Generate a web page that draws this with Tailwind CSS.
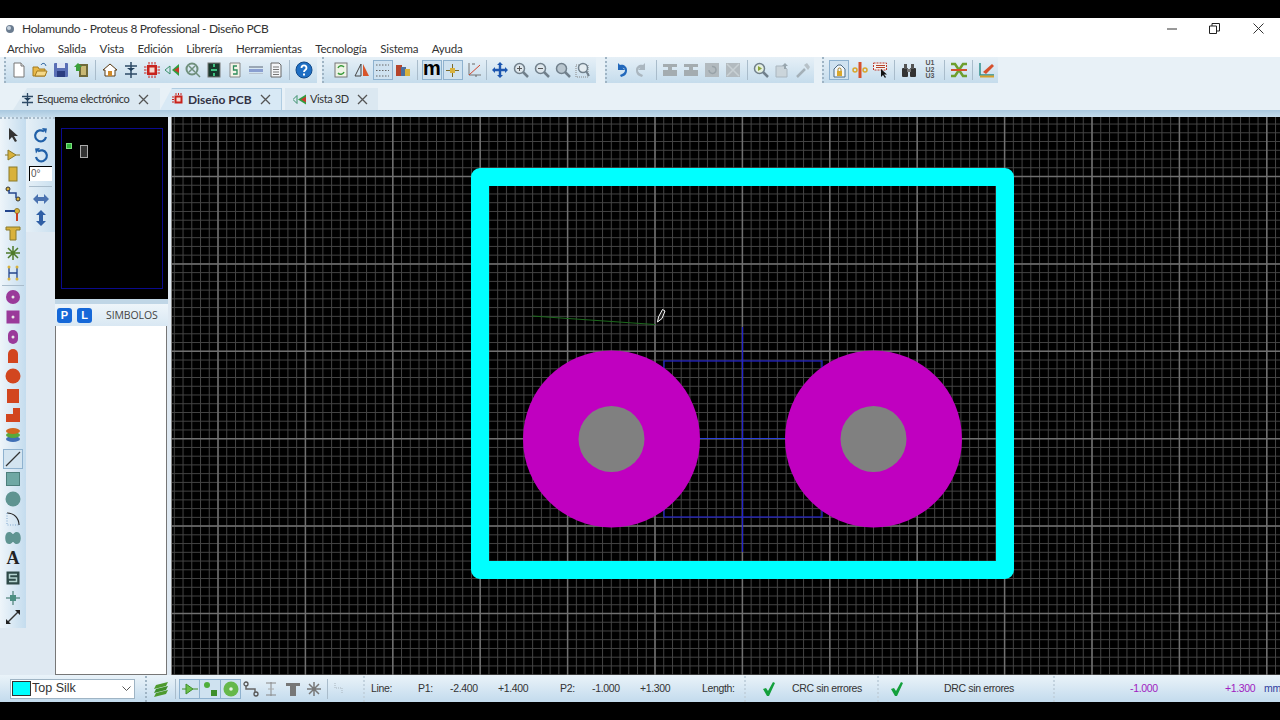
<!DOCTYPE html>
<html lang="en">
<head>
<meta charset="UTF-8">
<title>Holamundo - Proteus 8 Professional - Diseño PCB</title>
<script src="https://cdn.jsdelivr.net/npm/@tailwindcss/browser@4"></script>
</head>
<body class="bg-black overflow-hidden">
<div class="w-[1280px] h-[720px] flex flex-col font-['Liberation_Sans',sans-serif] text-[11px] text-[#222]">
  <div class="h-[18px] bg-black shrink-0"></div>

  <!-- title bar -->
  <div class="h-[21px] bg-white flex items-center shrink-0">
    <svg class="ml-[5px] w-[10px] h-[10px]" viewBox="0 0 10 10"><circle cx="5" cy="5" r="4" fill="#6b7c90"/><circle cx="4" cy="4" r="2" fill="#c6d2de"/></svg>
    <span class="ml-[7px] text-[12px] tracking-[-0.35px] text-[#333] font-['Lato',sans-serif]">Holamundo - Proteus 8 Professional - Diseño PCB</span>
    <div class="ml-auto flex items-center h-full">
      <svg class="w-[10px] h-[10px] mr-[32px]" viewBox="0 0 10 10"><path d="M0 5h10" stroke="#333" fill="none"/></svg>
      <svg class="w-[11px] h-[11px] mr-[33px]" viewBox="0 0 11 11"><path d="M0.500 3h7v7.500h-7zM3 3V0.500h7.500V8H8" stroke="#222" fill="none"/></svg>
      <svg class="w-[11px] h-[11px] mr-[16px]" viewBox="0 0 11 11"><path d="M0.500 0.500l10 10M10.500 0.500l-10 10" stroke="#333" fill="none"/></svg>
    </div>
  </div>

  <!-- menu -->
  <div class="h-[18px] bg-white flex items-center gap-[13.5px] pl-[7px] pt-[2px] shrink-0 text-[11.5px] tracking-[-0.2px] text-[#333] font-['Lato',sans-serif]">
    <span>Archivo</span><span>Salida</span><span>Vista</span><span>Edición</span><span>Librería</span><span>Herramientas</span><span>Tecnología</span><span>Sistema</span><span>Ayuda</span>
  </div>

  <!-- main toolbar -->
  <div class="h-[27px] bg-[#e8f1f7] shrink-0 flex items-start">
    <div class="ml-[4px] h-[26px] w-[313px] bg-gradient-to-b from-[#e6f0f7] to-[#c5dcec] border-l-2 border-dotted border-[#9fb4c4] flex items-center gap-[4.8px] pl-[5px]">
      <svg class="w-4 h-4 shrink-0" viewBox="0 0 16 16"><path d="M3 1h7l3 3v11H3z" fill="#fff" stroke="#777"/><path d="M10 1v3h3" fill="#e5e5e5" stroke="#777"/></svg>
      <svg class="w-4 h-4 shrink-0" viewBox="0 0 16 16"><path d="M1 5h5l1 2h6v7H1z" fill="#e9b949" stroke="#a37a1e"/><path d="M3 14l2-5h10l-2 5z" fill="#f5d98a" stroke="#a37a1e"/><path d="M9 3c1-2 3-2 4-1l1 2" stroke="#3a6ea5" fill="none"/></svg>
      <svg class="w-4 h-4 shrink-0" viewBox="0 0 16 16"><rect x="1" y="1" width="14" height="14" rx="1" fill="#5a6fb5"/><rect x="4" y="1" width="8" height="5" fill="#dfe6f5"/><rect x="4" y="9" width="8" height="6" fill="#2b3d80"/></svg>
      <svg class="w-4 h-4 shrink-0" viewBox="0 0 16 16"><rect x="6" y="2" width="9" height="13" fill="#6f6a3a"/><rect x="8" y="4" width="5" height="9" fill="#c9b874"/><path d="M1 5l4-4 4 4H7v4H3V5z" fill="#3aa03a"/></svg>
      <div class="w-px h-5 bg-[#a9bccb] mx-px shrink-0"></div>
      <svg class="w-4 h-4 shrink-0" viewBox="0 0 16 16"><path d="M1 8l7-6 7 6h-2v6H3V8z" fill="#fff" stroke="#5b3a12"/><rect x="6" y="9" width="4" height="5" fill="#d08a2a"/></svg>
      <svg class="w-4 h-4 shrink-0" viewBox="0 0 16 16"><path d="M8 0v16M2 4h12M2 12h12" stroke="#2d4a66" stroke-width="1.500"/><path d="M4 6h8l-4 3z" fill="#1f3d5a"/></svg>
      <svg class="w-4 h-4 shrink-0" viewBox="0 0 16 16"><rect x="3" y="3" width="10" height="10" fill="#c8221c"/><rect x="5.500" y="5.500" width="5" height="5" fill="#f4d9d0"/><path d="M0 5h16M0 8h16M0 11h16M5 0v16M8 0v16M11 0v16" stroke="#c8221c" stroke-dasharray="2.500 11"/></svg>
      <svg class="w-4 h-4 shrink-0" viewBox="0 0 16 16"><path d="M1 8l5-4v8z" fill="none" stroke="#3a8f6a"/><path d="M8 8l7-6v12z" fill="#2f9e3f"/><path d="M10 8l5-3v6z" fill="#c83a2a"/></svg>
      <svg class="w-4 h-4 shrink-0" viewBox="0 0 16 16"><circle cx="7" cy="7" r="5.500" fill="none" stroke="#6f8f7c" stroke-width="2"/><path d="M4 4l6 6M10 4l-6 6M11 11l4 4" stroke="#6f8f7c" stroke-width="1.500"/></svg>
      <svg class="w-4 h-4 shrink-0" viewBox="0 0 16 16"><rect x="2" y="1" width="12" height="14" fill="#18382c" stroke="#777"/><path d="M8 2v3M5 8h6M8 11v3" stroke="#3fc07f" stroke-width="2"/></svg>
      <svg class="w-4 h-4 shrink-0" viewBox="0 0 16 16"><path d="M3 1h10v14H3z" fill="#f4f4e8" stroke="#888"/><path d="M10 4H6.500v4H10v4H6" stroke="#2e8a5a" fill="none" stroke-width="1.300"/></svg>
      <svg class="w-4 h-4 shrink-0" viewBox="0 0 16 16"><rect x="1" y="4" width="14" height="2" fill="#9aa7b5"/><rect x="1" y="7" width="14" height="3" fill="#8a9fd0"/><rect x="1" y="11" width="14" height="1" fill="#b8c3cf"/></svg>
      <svg class="w-4 h-4 shrink-0" viewBox="0 0 16 16"><path d="M3 1h8l2 2v12H3z" fill="#f4f6f8" stroke="#666"/><path d="M5 5h6M5 7.500h6M5 10h6M5 12.500h6" stroke="#777"/></svg>
      <div class="w-px h-5 bg-[#a9bccb] shrink-0"></div>
      <svg class="w-[18px] h-[18px] shrink-0" viewBox="0 0 18 18"><circle cx="9" cy="9" r="8" fill="#1f6fc4" stroke="#124a8a"/><path d="M6.500 7c0-3.500 5-3.500 5 0 0 2-2.500 2-2.500 4" fill="none" stroke="#fff" stroke-width="1.800"/><rect x="8" y="12.500" width="2" height="2" fill="#fff"/></svg>
    </div>
    <div class="ml-[5px] h-[26px] w-[274px] bg-gradient-to-b from-[#e6f0f7] to-[#c5dcec] border-l-2 border-dotted border-[#9fb4c4] flex items-center gap-[4.8px] pl-[9px]">
      <svg class="w-4 h-4 shrink-0" viewBox="0 0 16 16"><rect x="2" y="1" width="12" height="14" fill="#eef3e6" stroke="#777"/><path d="M5 6a3.500 3.500 0 0 1 6-1M11 10a3.500 3.500 0 0 1-6 1" stroke="#3a9a3a" stroke-width="1.500" fill="none"/></svg>
      <svg class="w-4 h-4 shrink-0" viewBox="0 0 16 16"><path d="M7 2v12H1z" fill="none" stroke="#444"/><path d="M9 2v12h6z" fill="#d8552b"/></svg>
      <div class="w-5 h-5 -mx-[2px] shrink-0 bg-[#cfe2f0] border border-[#8fb2cf] flex items-center justify-center"><svg class="w-[15px] h-[15px]" viewBox="0 0 15 15"><path d="M1 2h13M1 7.500h13M1 13h13" stroke="#666" stroke-dasharray="1.500 1.500"/></svg></div>
      <svg class="w-4 h-4 shrink-0" viewBox="0 0 16 16"><rect x="1" y="3" width="6" height="11" fill="#b5452c"/><rect x="6" y="5" width="5" height="9" fill="#4b6f9e"/><rect x="10" y="7" width="5" height="7" fill="#d9b23c"/></svg>
      <div class="w-px h-5 bg-[#a9bccb] mx-px shrink-0"></div>
      <div class="w-5 h-5 -mx-[2px] shrink-0 bg-[#cfe2f0] border border-[#8fb2cf] flex items-center justify-center text-[20px] leading-[15px] pb-[3px] font-bold text-black">m</div>
      <div class="w-5 h-5 -mx-[2px] shrink-0 bg-[#cfe2f0] border border-[#8fb2cf] flex items-center justify-center"><svg class="w-[15px] h-[15px]" viewBox="0 0 15 15"><path d="M7.500 1v13M1 7.500h13" stroke="#7a6a2a"/><rect x="5" y="5" width="5" height="5" fill="#d9b23c"/></svg></div>
      <svg class="w-4 h-4 shrink-0" viewBox="0 0 16 16"><path d="M3 1v12h12" stroke="#777" fill="none"/><path d="M3 13L14 3" stroke="#d0452c"/><path d="M6 2h3M10 13v2" stroke="#666"/></svg>
      <div class="w-px h-5 bg-[#a9bccb] shrink-0"></div>
      <svg class="w-4 h-4 shrink-0" viewBox="0 0 16 16"><path d="M8 0l3 3H9.200v3.800H13V5l3 3-3 3V9.200H9.200V13H11l-3 3-3-3h1.800V9.200H3V11L0 8l3-3v1.800h3.800V3H5z" fill="#1c56b0"/></svg>
      <svg class="w-4 h-4 shrink-0" viewBox="0 0 16 16"><circle cx="6.500" cy="6.500" r="5" fill="#dde6ec" stroke="#71808c" stroke-width="1.500"/><path d="M10 10l5 5" stroke="#71808c" stroke-width="2.500"/><path d="M4 6.500h5M6.500 4v5" stroke="#555"/></svg>
      <svg class="w-4 h-4 shrink-0" viewBox="0 0 16 16"><circle cx="6.500" cy="6.500" r="5" fill="#dde6ec" stroke="#71808c" stroke-width="1.500"/><path d="M10 10l5 5" stroke="#71808c" stroke-width="2.500"/><path d="M4 6.500h5" stroke="#555"/></svg>
      <svg class="w-4 h-4 shrink-0" viewBox="0 0 16 16"><circle cx="6.500" cy="6.500" r="5" fill="#b9c6cf" stroke="#71808c" stroke-width="1.500"/><path d="M10 10l5 5" stroke="#71808c" stroke-width="2.500"/></svg>
      <svg class="w-4 h-4 shrink-0" viewBox="0 0 16 16"><rect x="1" y="3" width="12" height="12" fill="none" stroke="#888" stroke-dasharray="1 1"/><circle cx="8" cy="6" r="4.500" fill="#e4ecf1" stroke="#71808c" stroke-width="1.500"/><path d="M11 9l3 5" stroke="#71808c" stroke-width="2"/></svg>
    </div>
    <div class="ml-[9px] h-[26px] w-[209px] bg-gradient-to-b from-[#e6f0f7] to-[#c5dcec] border-l-2 border-dotted border-[#9fb4c4] flex items-center gap-[4.8px] pl-[6px]">
      <svg class="w-4 h-4 shrink-0" viewBox="0 0 16 16"><path d="M8 15c4-1 6-3 6-7s-4-6-7-5L5 1v7h7L9.500 5.800C11 6 12 7 12 8.500S10 12 7 13z" fill="#2268bb"/></svg>
      <svg class="w-4 h-4 shrink-0" viewBox="0 0 16 16"><path d="M8 15c-4-1-6-3-6-7s4-6 7-5l2-2v7H4l2.500-2.200C5 6 4 7 4 8.500S6 12 9 13z" fill="#aab6bf"/></svg>
      <div class="w-px h-5 bg-[#a9bccb] mx-px shrink-0"></div>
      <svg class="w-4 h-4 shrink-0" viewBox="0 0 16 16"><path d="M1 2h14v3h-5v3h5v6H1V8h5V5H1z" fill="#a4acb0"/></svg>
      <svg class="w-4 h-4 shrink-0" viewBox="0 0 16 16"><path d="M1 2h14v3h-5v3h5v6H1V8h5V5H1z" fill="#a4acb0"/></svg>
      <svg class="w-4 h-4 shrink-0" viewBox="0 0 16 16"><rect x="1" y="1" width="14" height="14" fill="#b2babf"/><path d="M5 8a3.500 3.500 0 1 0 3-3.500" stroke="#98a2a8" fill="none" stroke-width="1.500"/></svg>
      <svg class="w-4 h-4 shrink-0" viewBox="0 0 16 16"><rect x="1" y="1" width="14" height="14" fill="#b2babf"/><path d="M2 2l12 12M14 2L2 14" stroke="#c8d0d4" stroke-width="1.500"/></svg>
      <div class="w-px h-5 bg-[#a9bccb] mx-px shrink-0"></div>
      <svg class="w-4 h-4 shrink-0" viewBox="0 0 16 16"><circle cx="6.500" cy="6.500" r="5" fill="#e4efe0" stroke="#71808c" stroke-width="1.500"/><path d="M10 10l5 5" stroke="#71808c" stroke-width="2.500"/><path d="M5 4v5l4-2.500z" fill="#8aa53a"/></svg>
      <svg class="w-4 h-4 shrink-0" viewBox="0 0 16 16"><path d="M2 4h8l3 3v8H2z" fill="#cbd5db" stroke="#aab6bf"/><path d="M11 1l3 3h-2v3h-2V4H8z" fill="#98a6ae"/></svg>
      <svg class="w-4 h-4 shrink-0" viewBox="0 0 16 16"><path d="M2 15l8-8" stroke="#a4b0b8" stroke-width="2.500"/><path d="M9 3l3-2 3 4-2 3z" fill="#b7c1c8"/></svg>
    </div>
    <div class="ml-[8px] h-[26px] w-[176px] bg-gradient-to-b from-[#e6f0f7] to-[#c5dcec] border-l-2 border-dotted border-[#9fb4c4] flex items-center gap-[4.8px] pl-[7px]">
      <div class="w-5 h-5 -mx-[2px] shrink-0 bg-[#cfe2f0] border border-[#8fb2cf] flex items-center justify-center"><svg class="w-[15px] h-[15px]" viewBox="0 0 15 15"><path d="M2 14V6l4-4h3l4 4v8z" fill="#f3f6f8" stroke="#4b6a85"/><rect x="5" y="8" width="5" height="5" fill="#d9a72c"/><path d="M6 8V6.500a1.500 1.500 0 0 1 3 0V8" fill="none" stroke="#a07c1e"/></svg></div>
      <svg class="w-4 h-4 shrink-0" viewBox="0 0 16 16"><rect x="6.500" y="0" width="3" height="16" fill="#d6502c"/><circle cx="3" cy="8" r="2" fill="none" stroke="#d9a72c" stroke-width="1.500"/><circle cx="13" cy="8" r="2" fill="none" stroke="#d9a72c" stroke-width="1.500"/></svg>
      <svg class="w-4 h-4 shrink-0" viewBox="0 0 16 16"><rect x="0.500" y="1" width="13" height="7" fill="#f2f2f2" stroke="#c0392b" stroke-dasharray="2 1"/><path d="M3 3.500h9M3 5.500h9" stroke="#b5452c"/><path d="M8 7v8l2-2 2 3 1-1-2-2.500h3z" fill="#111"/></svg>
      <div class="w-px h-5 bg-[#a9bccb] mx-px shrink-0"></div>
      <svg class="w-4 h-4 shrink-0" viewBox="0 0 16 16"><rect x="1" y="6" width="6" height="9" rx="1" fill="#333"/><rect x="9" y="6" width="6" height="9" rx="1" fill="#333"/><rect x="3" y="2" width="3" height="5" fill="#555"/><rect x="10" y="2" width="3" height="5" fill="#555"/><rect x="6" y="7" width="4" height="3" fill="#777"/></svg>
      <div class="flex flex-col w-4 shrink-0 text-[7px] leading-[6.500px] text-[#555] text-center font-bold"><span>U1</span><span>U2</span><span>U3</span></div>
      <div class="w-px h-5 bg-[#a9bccb] mx-px shrink-0"></div>
      <svg class="w-4 h-4 shrink-0" viewBox="0 0 16 16"><path d="M0 2h4l8 12h4M0 14h4l8-12h4" stroke="#6d9e2e" stroke-width="2.500" fill="none"/><path d="M0 8h16" stroke="#d6502c" stroke-width="2"/></svg>
      <div class="w-px h-5 bg-[#a9bccb] mx-px shrink-0"></div>
      <svg class="w-4 h-4 shrink-0" viewBox="0 0 16 16"><path d="M1 1v12h14" stroke="#2f8f8a" stroke-width="1.500" fill="none"/><path d="M4 10L13 2l2 2-8 8z" fill="#d6502c"/><rect x="1" y="13.500" width="14" height="2" fill="#d6a12c"/></svg>
    </div>
  </div>

  <!-- tab strip -->
  <div class="h-[26px] bg-[#e8f1f7] shrink-0 flex items-end pl-[13px] text-[#333]">
    <div class="h-[22px] w-[147px] bg-[#dbe8f1] flex items-center pl-[8px] [clip-path:polygon(0_100%,14px_0,100%_0,100%_100%)]">
      <svg class="w-[13px] h-[13px] shrink-0" viewBox="0 0 13 13"><path d="M6.500 0v13M1 3.500h11M1 9.500h11" stroke="#2d4a66" stroke-width="1.300"/><path d="M3 5h7L6.500 8z" fill="#1f3d5a"/></svg>
      <span class="ml-[3px] text-[11px] tracking-[-0.4px] font-['Lato',sans-serif] whitespace-nowrap">Esquema electrónico</span>
      <svg class="w-[11px] h-[11px] ml-auto mr-[11px] shrink-0" viewBox="0 0 11 11"><path d="M1 1l9 9M10 1l-9 9" stroke="#555" stroke-width="1.300"/></svg>
    </div>
    <div class="h-[22px] w-[122px] bg-[#d8e9f5] border-t border-r border-[#b0cde2] flex items-center pl-[12px] [clip-path:polygon(0_100%,12px_0,100%_0,100%_100%)]">
      <svg class="w-[13px] h-[13px] shrink-0" viewBox="0 0 13 13"><rect x="2.500" y="2.500" width="8" height="8" fill="#c8221c"/><rect x="4.500" y="4.500" width="4" height="4" fill="#f4d9d0"/><path d="M0 4h13M0 6.500h13M0 9h13M4 0v13M6.500 0v13M9 0v13" stroke="#c8221c" stroke-dasharray="2 11"/></svg>
      <span class="ml-[3px] text-[12px] font-bold text-[#334] font-['Lato',sans-serif] whitespace-nowrap">Diseño PCB</span>
      <svg class="w-[11px] h-[11px] ml-auto mr-[10px] shrink-0" viewBox="0 0 11 11"><path d="M1 1l9 9M10 1l-9 9" stroke="#555" stroke-width="1.300"/></svg>
    </div>
    <div class="ml-[3px] h-[22px] w-[93px] bg-[#dbe8f1] flex items-center pl-[8px]">
      <svg class="w-[14px] h-[11px] shrink-0" viewBox="0 0 14 11"><path d="M0 5.500l4-4v8z" fill="none" stroke="#3a8f6a"/><path d="M5 5.500l8-5v10z" fill="#2f9e3f"/><path d="M8 5.500l5-3v6z" fill="#c83a2a"/></svg>
      <span class="ml-[3px] text-[11px] tracking-[-0.4px] font-['Lato',sans-serif] whitespace-nowrap">Vista 3D</span>
      <svg class="w-[11px] h-[11px] ml-auto mr-[10px] shrink-0" viewBox="0 0 11 11"><path d="M1 1l9 9M10 1l-9 9" stroke="#555" stroke-width="1.300"/></svg>
    </div>
  </div>
  <div class="h-[7px] bg-gradient-to-b from-[#a9c8df] to-[#c5dcec] shrink-0"></div>

  <!-- work area -->
  <div class="h-[558px] flex shrink-0 bg-[#dfe9f2]">
    <!-- left tool column -->
    <div class="w-[26px] shrink-0 h-[511px] bg-gradient-to-r from-[#eef5fa] to-[#c4dcee] border-t-2 border-dotted border-[#a9bccb] flex flex-col items-center pt-[8px] gap-[3.7px]">
      <svg class="w-4 h-4 shrink-0" viewBox="0 0 16 16"><path d="M4 1v12l3-3 3 5 2-1-3-5h4z" fill="#333"/></svg>
      <svg class="w-4 h-4 shrink-0" viewBox="0 0 16 16"><path d="M3 3l8 5-8 5z" fill="#d9b23c" stroke="#8a7a2a"/><path d="M0 8h3M11 8h4" stroke="#8a7a2a"/></svg>
      <svg class="w-4 h-4 shrink-0" viewBox="0 0 16 16"><rect x="4" y="1" width="8" height="14" fill="#d9b23c" stroke="#8a7a2a"/></svg>
      <svg class="w-4 h-4 shrink-0" viewBox="0 0 16 16"><circle cx="3" cy="3" r="2" fill="#d9b23c" stroke="#333"/><circle cx="13" cy="13" r="2" fill="#d9b23c" stroke="#333"/><path d="M4 4v3h7v5" stroke="#24458c" stroke-width="1.500" fill="none"/></svg>
      <svg class="w-4 h-4 shrink-0" viewBox="0 0 16 16"><circle cx="12" cy="5" r="2.500" fill="#d9b23c" stroke="#8a7a2a"/><path d="M0 5h10" stroke="#24458c" stroke-width="2"/><path d="M12 7v8" stroke="#c8401f" stroke-width="2"/></svg>
      <svg class="w-4 h-4 shrink-0" viewBox="0 0 16 16"><path d="M1 2h14v3h-4v10H5V5H1z" fill="#d9b23c" stroke="#8a7a2a"/></svg>
      <svg class="w-4 h-4 shrink-0" viewBox="0 0 16 16"><path d="M8 1v14M1 8h14M3 3l10 10M13 3L3 13" stroke="#4d7a2a" stroke-width="1.500"/></svg>
      <svg class="w-4 h-4 shrink-0" viewBox="0 0 16 16"><path d="M4 2v12M12 2v12M4 8h8" stroke="#24458c" stroke-width="1.300"/><circle cx="4" cy="2" r="1.500" fill="#d9b23c"/><circle cx="12" cy="2" r="1.500" fill="#d9b23c"/><circle cx="4" cy="14" r="1.500" fill="#d9b23c"/><circle cx="12" cy="14" r="1.500" fill="#d9b23c"/></svg>
      <div class="w-[22px] h-px bg-[#a9bccb] shrink-0"></div>
      <svg class="w-4 h-4 shrink-0" viewBox="0 0 16 16"><circle cx="8" cy="8" r="7" fill="#9a3a9a"/><circle cx="8" cy="8" r="1.500" fill="#e8e8e8"/></svg>
      <svg class="w-4 h-4 shrink-0" viewBox="0 0 16 16"><rect x="1.500" y="1.500" width="13" height="13" fill="#9a3a9a"/><circle cx="8" cy="8" r="1.500" fill="#e8e8e8"/></svg>
      <svg class="w-4 h-4 shrink-0" viewBox="0 0 16 16"><rect x="3" y="1" width="10" height="14" rx="5" fill="#9a3a9a"/><circle cx="8" cy="8" r="1.500" fill="#e8e8e8"/></svg>
      <svg class="w-4 h-4 shrink-0" viewBox="0 0 16 16"><path d="M3 15V6a5 5 0 0 1 10 0v9z" fill="#d2461f"/></svg>
      <svg class="w-4 h-4 shrink-0" viewBox="0 0 16 16"><circle cx="8" cy="8" r="7.500" fill="#d2461f"/></svg>
      <svg class="w-4 h-4 shrink-0" viewBox="0 0 16 16"><rect x="2" y="1" width="12" height="14" fill="#d2461f"/></svg>
      <svg class="w-4 h-4 shrink-0" viewBox="0 0 16 16"><path d="M1 15V7h7V1h7v14z" fill="#d2461f"/></svg>
      <svg class="w-4 h-4 shrink-0" viewBox="0 0 16 16"><ellipse cx="8" cy="12" rx="7" ry="3" fill="#3f6fb5"/><ellipse cx="8" cy="8" rx="7" ry="3" fill="#5aa83a"/><ellipse cx="8" cy="4" rx="7" ry="3" fill="#d2661f"/></svg>
      <div class="w-[20px] h-[20px] mt-[2px] -mb-[1px] shrink-0 bg-[#d3e4f0] border border-[#8fb2cf] flex items-center justify-center"><svg class="w-4 h-4" viewBox="0 0 16 16"><path d="M1 15L15 1" stroke="#333" stroke-width="1.200"/></svg></div>
      <svg class="w-4 h-4 shrink-0" viewBox="0 0 16 16"><rect x="1.500" y="1.500" width="13" height="13" fill="#6fa8a4" stroke="#4d7f7c"/></svg>
      <svg class="w-4 h-4 shrink-0" viewBox="0 0 16 16"><circle cx="8" cy="8" r="7.500" fill="#5f9491"/></svg>
      <svg class="w-4 h-4 shrink-0" viewBox="0 0 16 16"><path d="M2 2c7 0 12 5 12 12" fill="none" stroke="#222" stroke-width="1.200"/><path d="M2 2v12h12" fill="none" stroke="#7fa6cc" stroke-dasharray="1 1.500"/></svg>
      <svg class="w-4 h-4 shrink-0" viewBox="0 0 16 16"><path d="M4 2c3 0 3 2 4 2s1-2 4-2c5 0 5 12 0 12-3 0-3-2-4-2s-1 2-4 2C-1 14-1 2 4 2z" fill="#5f9491"/></svg>
      <span class="h-4 leading-4 shrink-0 text-[18px] font-bold text-[#222] font-['Liberation_Serif',serif]">A</span>
      <svg class="w-4 h-4 shrink-0" viewBox="0 0 16 16"><rect x="1.500" y="1.500" width="13" height="13" fill="#2f4a48"/><path d="M12 4.500H4.500V8h7v3.500H4" fill="none" stroke="#b5d4d0" stroke-width="1.500"/></svg>
      <svg class="w-4 h-4 shrink-0" viewBox="0 0 16 16"><path d="M8 1v14M1 8h14" stroke="#2f6b5f"/><rect x="5" y="5" width="6" height="6" fill="#4d9084"/></svg>
      <svg class="w-4 h-4 shrink-0" viewBox="0 0 16 16"><path d="M2 14L14 2" stroke="#333" stroke-width="1.500"/><path d="M1 10v5h5zM15 6V1h-5z" fill="#222"/></svg>
    </div>
    <!-- second column -->
    <div class="w-[29px] shrink-0 h-[115px] bg-gradient-to-r from-[#e6f0f7] to-[#c9dfef] border-t-2 border-dotted border-[#a9bccb] flex flex-col items-center pt-[9px]">
      <svg class="w-4 h-4 shrink-0" viewBox="0 0 16 16"><path d="M13 9A5.500 5.500 0 1 1 11 3.500" fill="none" stroke="#2060a8" stroke-width="2.200"/><path d="M9 0l5 .500-1 5z" fill="#2060a8"/></svg>
      <svg class="w-4 h-4 mt-[4px] shrink-0" viewBox="0 0 16 16"><path d="M3 9a5.500 5.500 0 1 0 2-5.500" fill="none" stroke="#2060a8" stroke-width="2.200"/><path d="M7 0L2 .500l1 5z" fill="#2060a8"/></svg>
      <div class="mt-[2px] w-[23px] h-[15px] bg-white border-t border-l border-black text-[10px] leading-[13px] pl-[1px] text-[#555] shrink-0">0°</div>
      <div class="mt-[5px] w-[23px] h-px bg-[#a9bccb] shrink-0"></div>
      <svg class="w-4 h-[12px] mt-[6px] shrink-0" viewBox="0 0 16 12"><path d="M0 6l5-5v3h6V1l5 5-5 5V8H5v3z" fill="#4a72b0"/></svg>
      <svg class="w-[12px] h-4 mt-[5px] shrink-0" viewBox="0 0 12 16"><path d="M6 0l5 5H8v6h3l-5 5-5-5h3V5H1z" fill="#2f5fa5"/></svg>
    </div>
    <!-- overview + list -->
    <div class="w-[113px] shrink-0 flex flex-col">
      <div class="h-[182px] bg-black shrink-0 flex items-center justify-center">
        <div class="w-[102px] h-[161px] border border-[#0a0a8e] relative">
          <div class="absolute left-[4px] top-[14px] w-[6px] h-[6px] bg-[#2fb53a] border border-[#7bdc7f]"></div>
          <div class="absolute left-[18px] top-[16px] w-[8px] h-[13px] border border-[#aaa] bg-[#333]"></div>
        </div>
      </div>
      <div class="h-[5px] bg-[#c0d6e6] shrink-0"></div>
      <div class="h-[22px] shrink-0 bg-gradient-to-b from-[#eef5fa] to-[#d9e8f3] flex items-center pl-[2px]">
        <div class="w-[15px] h-[15px] rounded-[3px] bg-[#1668d8] text-white text-[11px] font-bold flex items-center justify-center">P</div>
        <div class="ml-[5px] w-[15px] h-[15px] rounded-[3px] bg-[#1668d8] text-white text-[11px] font-bold flex items-center justify-center">L</div>
        <span class="ml-[14px] pt-px text-[10.5px] text-[#444] font-['Open_Sans',sans-serif] tracking-[-0.1px]">SIMBOLOS</span>
      </div>
      <div class="h-[349px] mr-[1px] bg-white border border-[#777] border-t-0 shrink-0"></div>
    </div>
    <div class="w-[4px] shrink-0 bg-[#dfe9f2] border-r border-[#888]"></div>
    <!-- canvas -->
    <div class="w-[1108px] h-[558px] shrink-0 bg-black relative overflow-hidden">
      <svg class="absolute inset-0" width="1108" height="558" viewBox="0 0 1108 558">
        <defs>
          <pattern id="minor" x="1.800" y="6.560" width="8.740" height="8.740" patternUnits="userSpaceOnUse"><path d="M0.500 0V8.740" stroke="#444" stroke-width="1"/><path d="M0 0.500H8.740" stroke="#444" stroke-width="1"/></pattern>
        </defs>
        <rect width="1108" height="558" fill="url(#minor)"/>
        <g stroke="#707070" stroke-width="1.500">
          <path d="M46 0V558M133.400 0V558M220.800 0V558M308.200 0V558M395.600 0V558M483 0V558M570.400 0V558M657.800 0V558M745.200 0V558M832.600 0V558M920 0V558M1007.400 0V558M1094.800 0V558"/>
          <path d="M0 59.500H1108M0 146.900H1108M0 234.300H1108M0 321.700H1108M0 409.100H1108M0 496.500H1108"/>
        </g>
        <!-- board outline -->
        <rect x="308" y="60" width="525" height="393" fill="none" stroke="#00ffff" stroke-width="18" stroke-linejoin="round"/>
        <!-- blue footprint -->
        <g fill="none" stroke="#2222cc" stroke-width="1.200">
          <rect x="492" y="244" width="158" height="156"/>
          <path d="M570.500 210V435"/>
          <path d="M527 321.500H613" stroke="#2a40e0"/>
        </g>
        <circle cx="439.500" cy="322" r="88.500" fill="#c000c0"/>
        <circle cx="701.500" cy="322" r="88.500" fill="#c000c0"/>
        <circle cx="439.500" cy="322" r="33" fill="#808080"/>
        <circle cx="701.500" cy="322" r="33" fill="#808080"/>
        <!-- track being drawn -->
        <path d="M360 199L483 207.500" stroke="#1c6a1c" stroke-width="1" fill="none"/>
        <!-- pencil cursor -->
        <path d="M485.500 205l1-5 4-7.500 2.500 1.500-3 7.500z" fill="#222" stroke="#fff" stroke-width="1"/>
      </svg>
    </div>
  </div>

  <!-- status bar -->
  <div class="h-[27px] shrink-0 bg-gradient-to-b from-[#eaf3f9] to-[#c3dbed] flex items-center text-[#333] text-[10.5px] tracking-[-0.35px]">
    <div class="ml-[10px] w-[125px] h-[20px] bg-white border border-[#9fb4c4] flex items-center pl-[1px] shrink-0">
      <div class="w-[19px] h-[15px] bg-[#00ffff] border border-[#333]"></div>
      <span class="ml-[1px] text-[12.5px] tracking-normal">Top Silk</span>
      <svg class="w-[9px] h-[5px] ml-auto mr-[3px]" viewBox="0 0 9 5"><path d="M0.500 0.500l4 4 4-4" stroke="#555" fill="none"/></svg>
    </div>
    <div class="ml-[10px] h-[26px] border-l-2 border-dotted border-[#9fb4c4] shrink-0"></div>
    <svg class="w-4 h-4 ml-[6px] shrink-0" viewBox="0 0 16 16"><path d="M3 4l12-3-2 4-12 3z" fill="#4d9a2e"/><path d="M3 8l12-3-2 4-12 3z" fill="#3f8f2a"/><path d="M3 12l12-3-2 4-12 3z" fill="#4d9a2e"/></svg>
    <div class="ml-[6px] w-px h-5 bg-[#a9bccb] shrink-0"></div>
    <div class="ml-[3px] flex shrink-0">
      <div class="w-[21px] h-[20px] bg-[#cfe2f0] border border-[#8fb2cf] flex items-center justify-center"><svg class="w-4 h-4" viewBox="0 0 16 16"><path d="M4 3l7 5-7 5z" fill="#6cc04a" stroke="#3f8f2a"/><path d="M0 8h4M11 8h5" stroke="#3f8f2a"/></svg></div>
      <div class="w-[21px] h-[20px] bg-[#cfe2f0] border-y border-r border-[#8fb2cf] flex items-center justify-center"><svg class="w-4 h-4" viewBox="0 0 16 16"><circle cx="5" cy="4" r="3" fill="#4fae3a"/><rect x="9" y="9" width="6" height="6" fill="#3f8f2a"/></svg></div>
      <div class="w-[20px] h-[20px] bg-[#cfe2f0] border-y border-r border-[#8fb2cf] flex items-center justify-center"><svg class="w-4 h-4" viewBox="0 0 16 16"><circle cx="8" cy="8" r="7.500" fill="#66b84a"/><circle cx="8" cy="8" r="1.800" fill="#e6f3e0"/></svg></div>
    </div>
    <svg class="w-4 h-4 ml-[2px] shrink-0" viewBox="0 0 16 16"><circle cx="3" cy="3" r="2" fill="none" stroke="#555" stroke-width="1.300"/><circle cx="13" cy="13" r="2" fill="none" stroke="#555" stroke-width="1.300"/><path d="M3 5v3h9v3" stroke="#666" stroke-width="1.500" fill="none"/></svg>
    <svg class="w-4 h-4 ml-[4px] shrink-0" viewBox="0 0 16 16"><path d="M8 1v14M3 2h10M3 14h10" stroke="#888"/><path d="M5 8h6" stroke="#aaa"/></svg>
    <svg class="w-4 h-4 ml-[6px] shrink-0" viewBox="0 0 16 16"><path d="M1 2h14v3h-4v10H5V5H1z" fill="#777"/></svg>
    <svg class="w-4 h-4 ml-[5px] shrink-0" viewBox="0 0 16 16"><path d="M8 1v14M1 8h14M3 3l10 10M13 3L3 13" stroke="#777" stroke-width="1.500"/></svg>
    <div class="ml-[5px] w-px h-5 bg-[#a9bccb] shrink-0"></div>
    <svg class="w-[14px] h-[14px] ml-[5px] shrink-0" viewBox="0 0 14 14"><path d="M2 1v5h7v5" stroke="#aab6bf" fill="none" stroke-dasharray="1 1"/></svg>
    <div class="ml-[16px] h-[26px] border-l-2 border-dotted border-[#c3d3df] shrink-0"></div>
    <span class="ml-[6px] w-[47px] shrink-0">Line:</span>
    <span class="w-[32px] shrink-0">P1:</span>
    <span class="w-[48px] shrink-0">-2.400</span>
    <span class="w-[62px] shrink-0">+1.400</span>
    <span class="w-[32px] shrink-0">P2:</span>
    <span class="w-[48px] shrink-0">-1.000</span>
    <span class="w-[62px] shrink-0">+1.300</span>
    <span class="w-[42px] shrink-0">Length:</span>
    <div class="h-[26px] border-l-2 border-dotted border-[#c3d3df] shrink-0"></div>
    <svg class="w-[14px] h-[14px] ml-[16px] shrink-0" viewBox="0 0 14 14"><path d="M1 7l3-1 2 3 5-9 2 1-6 13H5z" fill="#14a03c"/></svg>
    <span class="ml-[16px] w-[85px] shrink-0">CRC sin errores</span>
    <div class="h-[26px] border-l-2 border-dotted border-[#c3d3df] shrink-0"></div>
    <svg class="w-[14px] h-[14px] ml-[11px] shrink-0" viewBox="0 0 14 14"><path d="M1 7l3-1 2 3 5-9 2 1-6 13H5z" fill="#14a03c"/></svg>
    <span class="ml-[40px] w-[109px] shrink-0">DRC sin errores</span>
    <div class="h-[26px] border-l-2 border-dotted border-[#c3d3df] shrink-0"></div>
    <span class="ml-[75px] w-[95px] shrink-0 text-[#a020c0]">-1.000</span>
    <span class="w-[39px] shrink-0 text-[#a020c0]">+1.300</span>
    <span class="text-[#3040a0]">mm</span>
  </div>
  <div class="flex-1 bg-black"></div>
</div>
</body>
</html>
